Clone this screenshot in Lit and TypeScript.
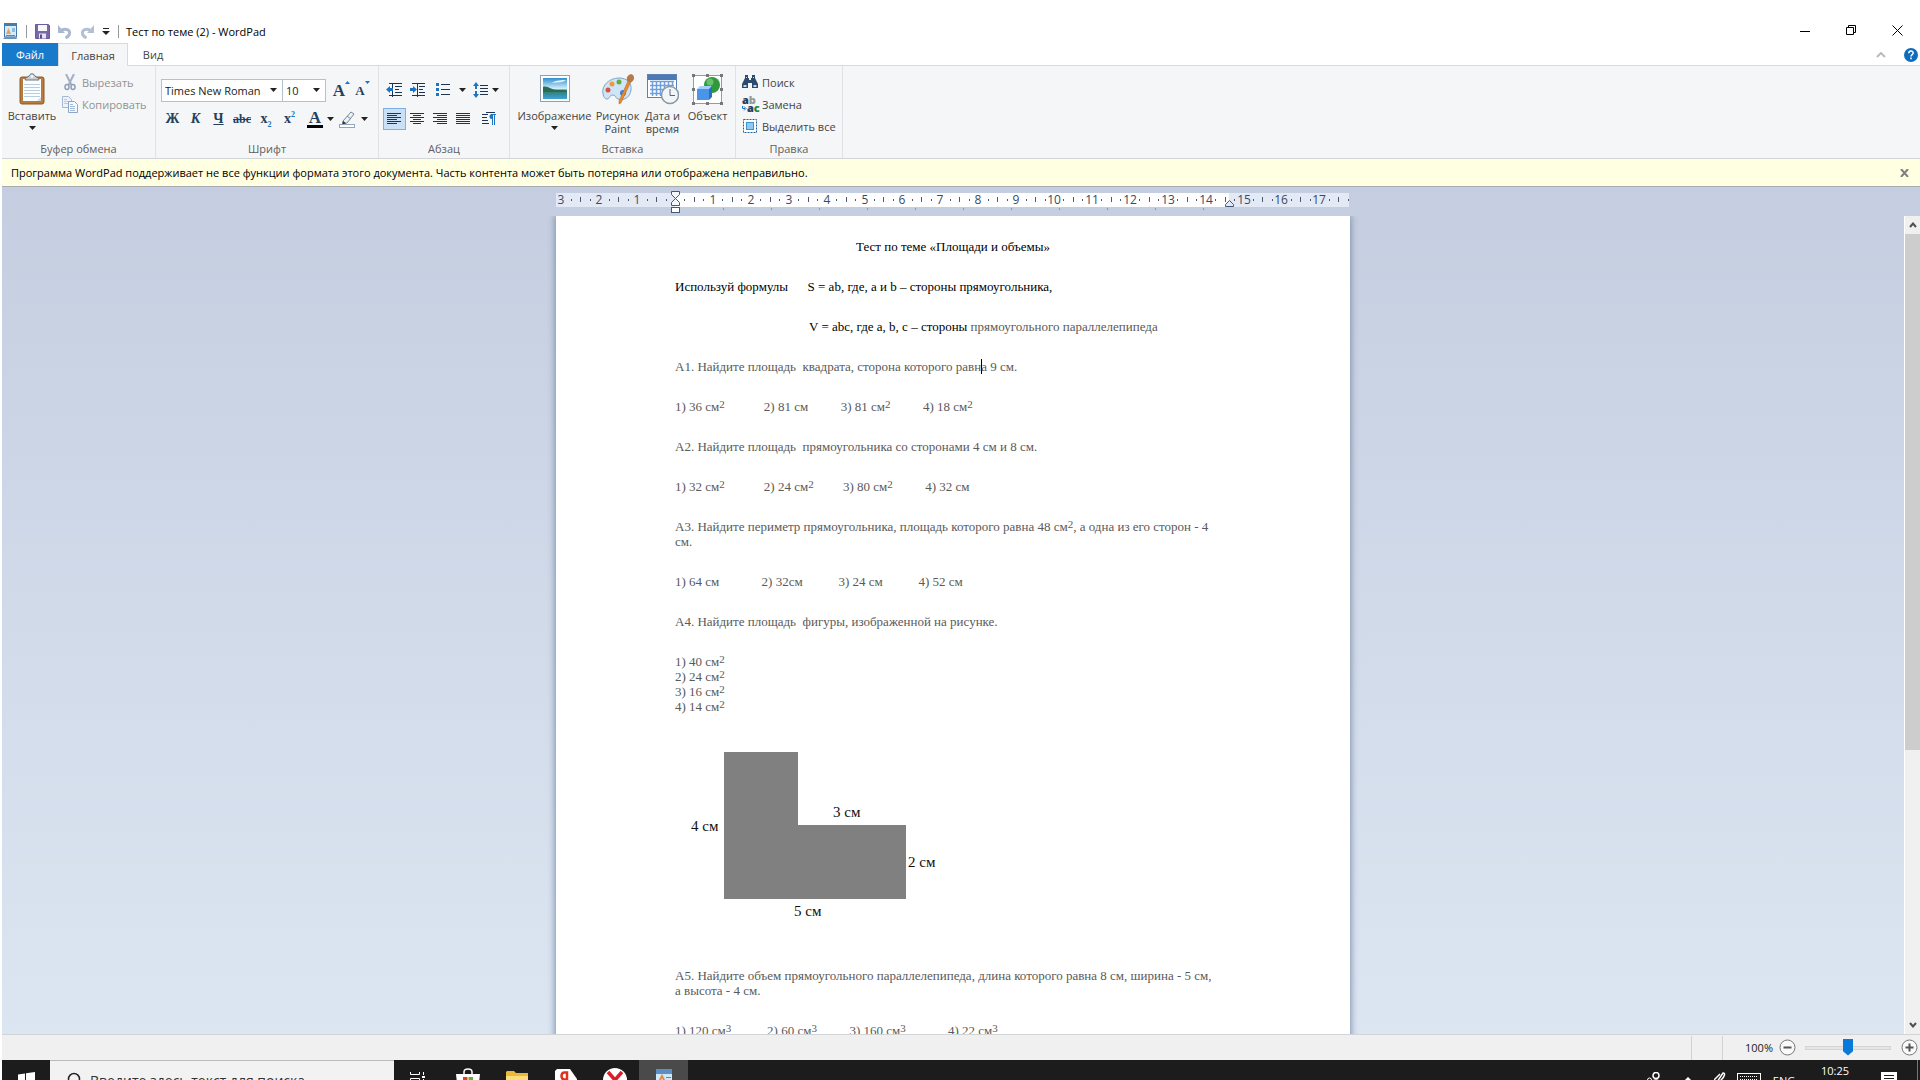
import { LitElement, html, svg, css, nothing, TemplateResult } from "lit";
import { customElement, property, state } from "lit/decorators.js";
import { classMap } from "lit/directives/class-map.js";

/* ---------- icons ---------- */

const icon = (w: number, h: number, body: TemplateResult) =>
  html`<svg width=${w} height=${h} viewBox="0 0 ${w} ${h}" aria-hidden="true">${body}</svg>`;

const arrowDown = icon(7, 4, svg`<path d="M0 0h7L3.5 4z" fill="#222"/>`);

const appIcon = icon(15, 17, svg`
  <rect x="1.5" y="1" width="12" height="13" fill="#d6ecfb" stroke="#3f78ad"/>
  <rect x="1" y="0" width="13" height="3" fill="#4a7ba8"/>
  <path d="M3 11l2.5-6L8 11z" fill="#e9a25c"/><path d="M9 6h3M9 8h3M3 12.500h9" stroke="#3f8fd0"/>
  <path d="M0 16l2-2h11l1 2z" fill="#6c93b8"/>`);
const saveIcon = icon(15, 15, svg`
  <path d="M.5.5h13l1 1v13H.5z" fill="#7a68a8" stroke="#6c5a9c"/>
  <rect x="3" y="1" width="9" height="6" fill="#f6f6fb"/><rect x="4" y="9.500" width="7" height="5" fill="#e7e4f2"/>
  <rect x="5" y="10.500" width="2" height="4" fill="#5b4a8a"/>`);
const undoIcon = icon(14, 14, svg`
  <path d="M3 5.500C8 3 12 4.500 11.500 8.500c-.3 2-2 3.500-4 4.500" fill="none" stroke="#a9b8cf" stroke-width="3"/>
  <path d="M0 0v8h7z" fill="#a9b8cf"/>`);
const redoIcon = icon(14, 14, svg`
  <path d="M11 5.500C6 3 2 4.500 2.500 8.500c.3 2 2 3.500 4 4.500" fill="none" stroke="#b3c0d3" stroke-width="3"/>
  <path d="M14 0v8H7z" fill="#b3c0d3"/>`);
const customizeIcon = icon(8, 8, svg`<path d="M1 .5h6" stroke="#222"/><path d="M0 3h8L4 7z" fill="#222"/>`);

const minimizeIcon = icon(11, 11, svg`<path d="M0 6.500h10" stroke="#000"/>`);
const restoreIcon = icon(11, 11, svg`<path d="M.5 2.500h7v7h-7zM2.500 2.500v-2h7v7h-2" fill="none" stroke="#000"/>`);
const closeIcon = icon(11, 11, svg`<path d="M.5.5l10 10M10.500.5l-10 10" stroke="#000"/>`);
const chevronUp = icon(10, 6, svg`<path d="M1 5l4-4 4 4" fill="none" stroke="#bbb" stroke-width="2"/>`);
const helpIcon = html`<svg width="14" height="14" viewBox="0 0 14 14" aria-hidden="true">
  <circle cx="7" cy="7" r="7" fill="#0f6cbd"/>
  <path d="M4.800 5.300c0-3 4.400-3 4.400-.3 0 1.600-2.200 1.600-2.200 3.400M7 9.600v1.600" fill="none" stroke="#fff" stroke-width="1.500"/></svg>`;

const pasteIcon = icon(26, 32, svg`
  <rect x="1" y="4" width="24" height="27" rx="2" fill="#b87a3d" stroke="#8c5a2a"/>
  <rect x="4" y="6" width="18" height="22" fill="#fbfdff"/>
  <path d="M5 11.500h16M5 14.500h16M5 17.500h16M5 20.500h16M5 23.500h16" stroke="#b9cde0"/>
  <path d="M6 7c0-3 3-2 4-4 1-3 5-3 6 0 1 2 4 1 4 4z" fill="#c9ced3" stroke="#6f777e"/>
  <circle cx="13" cy="3.500" r="1.200" fill="#fff"/><path d="M18 28l4-4v4z" fill="#cfd8e2"/>`);
const cutIcon = icon(12, 17, svg`
  <path d="M2 0l5.500 11M10 0L4.500 11" stroke="#a3b0c2" stroke-width="2" fill="none"/>
  <ellipse cx="3" cy="13" rx="2" ry="2.500" fill="none" stroke="#8fa0b8" stroke-width="1.500"/>
  <ellipse cx="9" cy="13" rx="2" ry="2.500" fill="none" stroke="#8fa0b8" stroke-width="1.500"/>`);
const copyIcon = icon(16, 17, svg`
  <path d="M.5.5h6l3 3v8h-9z" fill="#eef3fa" stroke="#a5b9d2"/><path d="M2 5.500h5M2 7.500h5M2 3.500h3" stroke="#b9c9de"/>
  <path d="M6.500 5.500h6l3 3v8h-9z" fill="#f4f8fd" stroke="#8ba6c6"/><path d="M8 10.500h5M8 12.500h5M8 14.500h5M8 8.500h3" stroke="#a5bcd8"/>`);

const brushIcon = icon(18, 17, svg`
  <path d="M5 10L13 1l3 2-7 9-4 1z" fill="#eef1f4" stroke="#7a8794"/><path d="M9 5l4 3" stroke="#7a8794"/>
  <path d="M5 10l3 2-4 2z" fill="#333"/><rect x="1.500" y="13.500" width="15" height="3" fill="#fff" stroke="#8fa6c0"/>`);
const outdentIcon = icon(17, 14, svg`
  <path d="M3 .5h13M9 3.500h7M9 6.500h4M9 9.500h7M3 12.500h13M6.500 0v14" stroke="#1e3450" stroke-dasharray="none"/>
  <path d="M0 6.500L4 3v2h3v3H4v2z" fill="#1c74c4"/>`);
const indentIcon = icon(17, 14, svg`
  <path d="M3 .5h13M10 3.500h6M10 6.500h4M10 9.500h6M3 12.500h13M8.500 0v14" stroke="#1e3450"/>
  <path d="M8 6.500L4 3v2H1v3h3v2z" fill="#1c74c4"/>`);
const bulletsIcon = icon(15, 14, svg`
  <path d="M0 0h3v3H0zM0 5h3v3H0zM0 10h3v3H0z" fill="#1c74c4"/><path d="M5 1.500h9M5 6.500h9M5 11.500h9" stroke="#1e3450"/>`);
const spacingIcon = icon(16, 16, svg`
  <path d="M0 4l3-4 3 4H4v3H2V4zM0 12l3 4 3-4H4V9H2v3z" fill="#1c74c4"/>
  <path d="M7 3.500h8M7 6.500h8M7 9.500h8M7 12.500h8" stroke="#1e3450"/>`);

const alignIcon = (rows: number[][]) => icon(15, 12, svg`${rows.map(
  ([x, w], i) => svg`<rect x=${x} y=${i * 2} width=${w} height="1" fill="#1e3450"/>`)}`);
const alignLeft = alignIcon([[0, 14], [0, 10], [0, 14], [0, 10], [0, 14], [0, 10]]);
const alignCenter = alignIcon([[0, 14], [3, 8], [0, 14], [3, 8], [0, 14], [3, 8]]);
const alignRight = alignIcon([[0, 14], [4, 10], [0, 14], [4, 10], [0, 14], [4, 10]]);
const alignJustify = alignIcon([[0, 14], [0, 14], [0, 14], [0, 14], [0, 14], [0, 14]]);
const paragraphIcon = icon(15, 14, svg`
  <path d="M0 2.500h6M0 5.500h5M0 8.500h6M0 11.500h7M4 .5h9" stroke="#1e3450"/>
  <path d="M10 2a2.500 2.500 0 000 5z" fill="#1c74c4"/><path d="M10.500 2v11M12.500 2v11M9 2.500h5" fill="none" stroke="#1c74c4"/>`);

const pictureIcon = icon(30, 28, svg`
  <defs><linearGradient id="sky" x2="0" y2="1"><stop offset="0" stop-color="#2f8fd0"/><stop offset=".5" stop-color="#cfeefa"/>
  <stop offset=".6" stop-color="#2f7a6a"/><stop offset="1" stop-color="#3fa3d8"/></linearGradient></defs>
  <rect x=".5" y=".5" width="29" height="26" fill="#fff" stroke="#8ea1b3"/>
  <rect x="3" y="3" width="24" height="21" fill="url(#sky)"/>
  <path d="M3 12c4-2 8 3 14 3s8 0 10 1v1H3z" fill="#2b6b52"/><path d="M12 8c4-3 9-3 14-3-3 3-8 2-14 3z" fill="#fff" opacity=".8"/>`);
const paintIcon = icon(34, 32, svg`
  <path d="M2 21C0 12 9 5 18 5c8 0 13 5 12 12-1 8-8 11-13 9-3-1-2-4-5-4-4 0-3 4-6 4-2 0-3.500-2-4-5z" fill="#cfe4f6" stroke="#7fa5c8"/>
  <circle cx="7" cy="17" r="2.500" fill="#d9503f"/><circle cx="11" cy="11" r="2.500" fill="#ef9a3a"/>
  <circle cx="18" cy="9" r="2.500" fill="#5fae3e"/><circle cx="22" cy="20" r="3" fill="#3c7fd0"/>
  <path d="M27 8l2.500 1.500L20 30l-2 1v-3z" fill="#e58a32" stroke="#b8621c" stroke-width=".5"/>
  <path d="M26 8c-1-4 1-6 4-7l2 1c2 3 1 6-3 8z" fill="#b67a4a"/>`);
const calendarIcon = icon(32, 32, svg`
  <rect x=".5" y="1.500" width="29" height="23" fill="#fff" stroke="#5b82b5"/><rect x="1" y="2" width="28" height="5" fill="#4d79b4"/>
  <path d="M3 8.500h24M3 12.500h24M3 16.500h24M3 20.500h20M5.500 8v15M9.500 8v15M13.500 8v15M17.500 8v8M21.500 8v6M25.500 8v5" stroke="#6fa0dc" stroke-width="1.500"/>
  <circle cx="23" cy="22" r="8.500" fill="#f3f6f9" stroke="#8c98a5" stroke-width="1.500"/><path d="M23 16v6.500h5" fill="none" stroke="#5a6672"/>`);
const objectIcon = icon(31, 31, svg`
  <rect x="1.500" y="1.500" width="28" height="28" fill="#fff" stroke="#9b9b9b"/>
  <path d="M0 0h3v3H0zM14 0h3v3h-3zM28 0h3v3h-3zM0 14h3v3H0zM28 14h3v3h-3zM0 28h3v3H0zM14 28h3v3h-3zM28 28h3v3h-3z" fill="#777"/>
  <circle cx="20" cy="11" r="8" fill="#2f9a3c"/><circle cx="18" cy="8" r="3.500" fill="#7fd07f" opacity=".7"/>
  <path d="M5 15l3-3h12l-2 3z" fill="#9fd0ff"/><path d="M5 15h12v11H5z" fill="#4a95ea"/><path d="M17 15l3-3v11l-3 3z" fill="#2a6fc4"/>`);

const findIcon = icon(16, 14, svg`
  <path d="M3 0h3v3h1v2h2V3h1V0h3v3l3 6v4h-6V8H6v5H0V9l3-6z" fill="#2c4a6c"/>
  <path d="M1.500 10h3v2h-3zM11.500 10h3v2h-3z" fill="#c8d8ea"/><path d="M4 2.500h1M11 2.500h1" stroke="#c8d8ea"/>`);
const replaceIcon = html`<span class="replace-glyph" aria-hidden="true"><b>a<i>b</i></b><b>${icon(5, 5, svg`
  <path d="M.5 0v2.500H3M2 .5l2 2-2 2" fill="none" stroke="#1c74c4"/>`)}a<u>c</u></b></span>`;
const selectAllIcon = icon(15, 15, svg`
  <rect x=".5" y=".5" width="13" height="13" fill="#fff" stroke="#1f5f9c" stroke-dasharray="2 1"/>
  <rect x="3.500" y="3.500" width="7" height="7" fill="#8ccbf2" stroke="#3f93d0"/>`);

const winIcon = icon(17, 17, svg`
  <path d="M0 2.500L7 1.500V8H0zM8 1.300L17 0v8H8zM0 9h7v6.500L0 14.500zM8 9h9v8l-9-1.300z" fill="#fff"/>`);
const searchIcon = icon(16, 18, svg`
  <circle cx="9" cy="7" r="5.500" fill="none" stroke="#222" stroke-width="1.500"/><path d="M5 11l-4 5" stroke="#222" stroke-width="1.500"/>`);
const taskViewIcon = icon(17, 16, svg`
  <path d="M.5 0v2.500h9V0M.5 6.500h9v5h-9zM.5 16v-2.500h9V16M13.500 0v3M13.500 7v9" fill="none" stroke="#fff"/>
  <rect x="12" y="4" width="3" height="2" fill="#fff"/>`);
const storeIcon = icon(24, 24, svg`
  <path d="M8 7V4c0-4 8-4 8 0v3" fill="none" stroke="#fff" stroke-width="1.500"/><path d="M0 6h24l-2 18H2z" fill="#fff"/>
  <path d="M7 9h4.500v4.500H7z" fill="#d6472b"/><path d="M12.500 9H17v4.500h-4.500z" fill="#6fae2c"/>
  <path d="M7 14.500h4.500V19H7z" fill="#2a8fd6"/><path d="M12.500 14.500H17V19h-4.500z" fill="#f2b01e"/>`);
const folderIcon = icon(22, 18, svg`
  <path d="M0 1l1-1h7l2 2h12v16H0z" fill="#e9b93c"/><path d="M0 5h22v13H0z" fill="#ffdc7a"/>`);
const yandexIcon = icon(22, 22, svg`
  <path d="M2 0h13l7 10v10l-2 2H2l-2-2V2z" fill="#fff"/>
  <path d="M12 19V3.500H9.500c-4 0-4 7 0 7H12M8.500 11L6 19" fill="none" stroke="#e0301e" stroke-width="2.500"/>`);
const browserIcon = icon(24, 24, svg`
  <circle cx="12" cy="12" r="12" fill="#fff"/><path d="M5 4l7 8 7-8M12 12v12" fill="none" stroke="#d81e2c" stroke-width="3.500"/>`);
const wordpadTask = icon(16, 22, svg`
  <rect width="16" height="22" fill="#cfe8fa"/><rect width="16" height="5" fill="#5b8fc2"/>
  <path d="M2 15L6 7l4 8" fill="none" stroke="#e58a4a" stroke-width="2"/><path d="M10 8.500h5M11 11.500h4M2 18.500h12" stroke="#3a8fd8"/>`);

const peopleIcon = icon(16, 16, svg`
  <circle cx="10" cy="3.500" r="3" fill="none" stroke="#fff" stroke-width="1.500"/><circle cx="3.500" cy="8" r="2" fill="none" stroke="#fff"/>
  <path d="M5 14c0-8 10-8 10 0" fill="none" stroke="#fff" stroke-width="1.500"/>`);
const trayChevron = icon(10, 6, svg`<path d="M1 5l4-4 4 4" fill="none" stroke="#fff" stroke-width="1.500"/>`);
const penTray = icon(12, 16, svg`
  <path d="M1 13L9 1c3 0 1 4-1 6s-3 3-3 6M0 8L6 2" fill="none" stroke="#fff" stroke-width="1.500"/>`);
const keyboardIcon = icon(24, 14, svg`
  <rect x=".5" y=".5" width="23" height="13" fill="none" stroke="#fff"/>
  <path d="M3 3.500h18M3 6.500h18" stroke="#fff" stroke-dasharray="1 1"/><path d="M6 10.500h12" stroke="#fff"/>`);
const noticeIcon = icon(17, 17, svg`
  <path d="M0 0h16v13H8l-4 4v-4H0z" fill="#fff"/><path d="M3 3.500h10M3 6.500h10M3 9.500h7" stroke="#1c1c1c"/>`);

/* ---------- ruler ---------- */

@customElement("doc-ruler")
export class DocRuler extends LitElement {
  @property({ type: Number }) origin = 119;

  static styles = css`
    :host { display: block; flex: none; width: 794px; height: 29px; }
    svg { display: block; }
    text { font: 12px "Open Sans", "Noto Sans", sans-serif; fill: #3a4a63; text-anchor: middle; }
  `;

  render() {
    const cm = 37.9;
    const marks: TemplateResult[] = [];
    for (let q = -12; q < 72; q++) {
      const x = this.origin + (q * cm) / 4;
      if (x > 792 || q === 0) continue;
      const px = Math.round(x);
      if (q % 4 === 0) marks.push(svg`<text x=${Math.max(px, 5)} y="17">${Math.abs(q / 4)}</text>`);
      else if (q % 2 === 0) marks.push(svg`<rect x=${px} y="10" width="1" height="5" fill="#4a5a74"/>`);
      else marks.push(svg`<rect x=${px} y="12" width="1" height="2" fill="#4a5a74"/>`);
    }
    const stops = Array.from({ length: 11 }, (_, i) => this.origin + 48 * (i + 1));
    return html`<svg width="794" height="29" viewBox="0 0 794 29" role="img" aria-label="Линейка">
      <rect y="6" width="793" height="14" fill="#e4eaf5"/>
      <rect x=${this.origin} y="6" width="554" height="14" fill="#fff"/>
      ${stops.map(x => svg`<rect x=${x} y="21" width="1" height="2" fill="#8a97ab"/>`)}
      ${marks}
      <path d="M115.500 4.500h8v3l-4 4 4 4v3h-8v-3l4-4-4-4z" fill="#f4f7fb" stroke="#44597a"/>
      <rect x="115.500" y="20.500" width="8" height="5" fill="#fff" stroke="#44597a"/>
      <path d="M669.500 19.500v-2l4-4 4 4v2z" fill="#e4eaf5" stroke="#44597a"/>
    </svg>`;
  }
}

/* ---------- document ---------- */

const sq = html`<sup>2</sup>`;
const cb = html`<sup>3</sup>`;
const sp = (n: number) => "\u00a0".repeat(n);

@customElement("doc-page")
export class DocPage extends LitElement {
  static styles = css`
    :host {
      display: block; flex: none; box-sizing: border-box; width: 794px;
      padding: 23px 119px 60px; background: #fff;
      box-shadow: 0 0 7px 1px #7d8eaa;
      font: 13px/15px "Liberation Serif", "Times New Roman", serif; color: #5a5a5a;
    }
    .body { display: flex; flex-direction: column; gap: 25px; }
    p { margin: 0; white-space: nowrap; }
    .ink { color: #000; }
    .title { text-align: center; }
    .formula { padding-left: 134px; }
    sup { font-size: 11px; line-height: 0; vertical-align: 3px; }
    .caret { display: inline-block; width: 1px; height: 15px; margin-right: -1px; background: #000; vertical-align: text-bottom; }
    svg { display: block; }
    svg text { font-size: 15px; fill: #111; }
  `;

  render() {
    return html`<article class="body">
      <p class="title ink">Тест по теме «Площади и объемы»</p>
      <p class="ink">Используй формулы${sp(6)}S = ab, где, a и b – стороны прямоугольника,</p>
      <p class="formula"><span class="ink">V = abc, где a, b, c – стороны</span> прямоугольного параллелепипеда</p>
      <p>А1. Найдите площадь${sp(2)}квадрата, сторона которого равн<span class="caret"></span>а 9 см.</p>
      <p>1) 36 см${sq}${sp(11)} 2) 81 см${sp(10)}3) 81 см${sq}${sp(9)} 4) 18 см${sq}</p>
      <p>А2. Найдите площадь${sp(2)}прямоугольника со сторонами 4 см и 8 см.</p>
      <p>1) 32 см${sq}${sp(11)} 2) 24 см${sq}${sp(9)}3) 80 см${sq}${sp(9)} 4) 32 см</p>
      <p>А3. Найдите периметр прямоугольника, площадь которого равна 48 см${sq}, а одна из его сторон - 4<br>см.</p>
      <p>1) 64 см${sp(12)} 2) 32см${sp(11)}3) 24 см${sp(10)} 4) 52 см</p>
      <p>А4. Найдите площадь${sp(2)}фигуры, изображенной на рисунке.</p>
      <p>1) 40 см${sq}<br>2) 24 см${sq}<br>3) 16 см${sq}<br>4) 14 см${sq}</p>
      <svg width="300" height="204" viewBox="0 0 300 204" role="img" aria-label="Фигура">
        <path d="M49 13h74v73h108v74H49z" fill="#808080"/>
        <text x="16" y="92">4 см</text><text x="158" y="78">3 см</text>
        <text x="233" y="128">2 см</text><text x="119" y="177">5 см</text>
      </svg>
      <p>А5. Найдите объем прямоугольного параллелепипеда, длина которого равна 8 см, ширина - 5 см,<br>а высота - 4 см.</p>
      <p>1) 120 см${cb}${sp(10)} 2) 60 см${cb}${sp(10)}3) 160 см${cb}${sp(12)} 4) 22 см${cb}</p>
    </article>`;
  }
}

/* ---------- application ---------- */

@customElement("app-root")
export class AppRoot extends LitElement {
  @state() private align = "left";
  @state() private zoom = 50;
  @state() private notice = true;

  static styles = css`
    :host {
      display: flex; flex-direction: column; box-sizing: border-box; height: 100vh;
      padding: 16px 0 0 2px; overflow: hidden; background: #fff; color: #444;
      font: 11px/13px "Open Sans", "Noto Sans", sans-serif;
    }
    svg { display: block; flex: none; }
    button, select, input { font: inherit; color: inherit; }
    button { display: flex; align-items: center; justify-content: center; margin: 0; padding: 0; border: 0; background: none; white-space: nowrap; }
    a { color: inherit; text-decoration: none; }
    .row { display: flex; align-items: center; }

    .titlebar { display: flex; align-items: center; height: 27px; flex: none; color: #000; }
    .quick { display: flex; align-items: center; gap: 8px; padding: 4px 0 0 1px; }
    .bar { width: 1px; height: 13px; background: #999; }
    h1 { margin: 0 auto 0 7px; padding-top: 4px; font: inherit; line-height: 16px; }
    .window { display: flex; align-self: flex-start; }
    .window button { width: 46px; height: 28px; }

    .tabs { display: flex; align-items: stretch; height: 23px; flex: none; box-shadow: inset 0 -1px #d9dadb; }
    .tabs a { display: flex; align-items: center; justify-content: center; box-sizing: border-box; }
    .tab-file { width: 56px; background: #1979ca; color: #fff; }
    .tab-home { width: 70px; background: #f5f6f7; border: 1px solid #d9dadb; border-bottom: 0; }
    .tab-view { width: 50px; }
    .tab-tools { display: flex; align-items: center; gap: 18px; margin-left: auto; padding-right: 2px; }
    .tab-tools button { flex: none; }

    .ribbon { display: flex; height: 92px; flex: none; background: #f5f6f7; border-bottom: 1px solid #d3d4d5; }
    .group { display: flex; flex-direction: column; box-sizing: border-box; border-right: 1px solid #e1e2e3; padding-bottom: 2px; }
    .group h2 { margin: 0; font: inherit; line-height: 14px; text-align: center; color: #5e5e5e; }
    .content { flex: 1; display: flex; }
    .clipboard { width: 154px; } .font { width: 223px; } .paragraph { width: 131px; } .insert { width: 226px; } .editing { width: 107px; }

    .big { flex-direction: column; justify-content: flex-start; gap: 4px; padding-top: 7px; text-align: center; }
    .big .pic { display: flex; align-items: center; justify-content: center; height: 32px; }
    .big .name { line-height: 13px; }
    .paste { width: 60px; }
    .w76 { width: 80px; } .w50 { width: 46px; } .w44 { width: 44px; } .w48 { width: 46px; }
    .insert .content { justify-content: center; }
    .stack { display: flex; flex-direction: column; padding-top: 5px; }
    .stack button { height: 22px; gap: 4px; justify-content: flex-start; }
    .stack .ico { display: flex; justify-content: center; width: 16px; }
    .off { color: #929292; }
    .editing .stack { padding-left: 6px; }

    .tools { display: flex; flex-direction: column; gap: 7px; padding: 13px 5px 0; }
    .tools .row { height: 22px; }
    .combo { display: grid; box-sizing: border-box; height: 23px; border: 1px solid #b6bfd0; background: #fff; align-items: center; }
    .combo + .combo { margin-left: -1px; }
    .combo > * { grid-area: 1 / 1; }
    .combo svg { justify-self: end; margin-right: 5px; pointer-events: none; }
    .combo select { appearance: none; box-sizing: border-box; width: 100%; height: 21px; padding: 0 12px 0 3px; border: 0; background: none; color: #222; outline: 0; }
    .family { width: 122px; } .size { width: 44px; }
    .glyph { width: 23px; height: 22px; font: bold 14px/20px "Liberation Serif", serif; color: #24405f; }
    .glyph.wide { width: 24px; }
    .glyph sup, .glyph sub { font-size: 8px; line-height: 0; color: #1c74c4; }
    .glyph i { font-weight: bold; }
    .glyph s { font-size: 12px; }
    .grow, .shrink { width: 21px; height: 22px; align-items: flex-end; font: bold 17px/20px "Liberation Serif", serif; color: #24405f; }
    .grow { margin-left: 5px; }
    .shrink { font-size: 13px; }
    .grow svg, .shrink svg { align-self: flex-start; margin-top: 2px; }
    .color { flex-direction: column; width: 16px; height: 18px; margin-left: 6px; font: bold 17px/13px "Liberation Serif", serif; color: #24405f; border-bottom: 3px solid #000; box-sizing: border-box; }
    .drop { width: 14px; height: 20px; }
    .pen { width: 20px; height: 20px; }

    .paragraph .tools { padding: 13px 4px 0; }
    .para { box-sizing: border-box; width: 23px; height: 22px; }
    .para.on { background: #c9e0f7; border: 1px solid #7db0e6; }
    .ml { margin-left: 3px; }

    .replace-glyph { display: block; width: 16px; font: bold 11px/8px "Open Sans", sans-serif; color: #24405f; }
    .replace-glyph b { display: flex; align-items: center; }
    .replace-glyph i { font-style: normal; color: #999; }
    .replace-glyph u { text-decoration: none; color: #1c8a3c; }

    .notice { display: flex; align-items: center; justify-content: space-between; height: 27px; flex: none; padding: 0 11px 0 9px; background: #ffffe1; border-bottom: 1px solid #a9adb3; color: #000; }

    .workspace { flex: 1; min-height: 0; display: flex; flex-direction: column; background: linear-gradient(#c5cee0, #dce6f2); }
    .ruler-row { display: flex; justify-content: center; padding-right: 16px; height: 29px; flex: none; }
    .view { flex: 1; min-height: 0; display: flex; }
    .canvas { flex: 1; display: flex; justify-content: center; overflow: hidden; align-items: flex-start; }
    .scroll { box-sizing: border-box; width: 16px; display: flex; flex-direction: column; background: #f0f0f0; border-left: 1px solid #fff; }
    .scroll button { height: 18px; flex: none; }
    .track { flex: 1; }
    .thumb { height: 66%; background: #cdcdcd; }

    .status { display: flex; align-items: center; justify-content: flex-end; box-sizing: border-box; height: 26px; flex: none; background: #f0f0f0; border-top: 1px solid #d2d5d8; color: #222; padding-right: 2px; }
    .cell { width: 30px; height: 24px; border-left: 1px solid #d2d2d2; }
    .percent { width: 50px; line-height: 24px; border-left: 1px solid #d2d2d2; text-align: right; margin-right: 6px; }
    .round { flex: none; }
    input[type="range"] { appearance: none; width: 86px; height: 18px; margin: 0 10px 0 9px; background: none; }
    input[type="range"]::-webkit-slider-runnable-track { height: 4px; background: #e6e6e6; border: 1px solid #d4d4d4; box-sizing: border-box; }
    input[type="range"]::-webkit-slider-thumb { appearance: none; width: 10px; height: 17px; margin-top: -8px; background: #0b79d8; clip-path: polygon(0 0, 100% 0, 100% 75%, 50% 100%, 0 75%); }

    .taskbar { height: 20px; flex: none; overflow: hidden; background: #1c1c1c; color: #fff; }
    .taskinner { display: flex; align-items: center; height: 40px; }
    .taskinner button { width: 49px; height: 40px; flex: none; }
    .taskinner .start { width: 48px; }
    .search { display: flex; align-items: center; gap: 9px; box-sizing: border-box; width: 344px; height: 40px; padding-left: 15px; background: #f2f2f2; border-top: 1px solid #bbb; }
    .search input { flex: 1; min-width: 0; border: 0; padding: 0; background: none; font-size: 14px; outline: 0; }
    .search input::placeholder { color: #333; opacity: 1; }
    .taskinner .running { background: #4a4a4a; }
    .tray { display: flex; align-items: center; height: 40px; margin-left: auto; }
    .taskinner .tray button { width: 34px; }
    .taskinner .tray .mid { width: 29px; }
    .lang { width: 42px; text-align: center; }
    .clock { width: 60px; align-self: flex-start; padding-top: 4px; line-height: 14px; text-align: center; }
    .taskinner .tray .bell { width: 48px; }
    .desk { width: 4px; height: 40px; border-right: 1px solid #777; margin-right: 2px; }
  `;

  private alignButton(id: string, label: string, glyph: TemplateResult) {
    return html`<button class=${classMap({ para: true, on: this.align === id })} aria-label=${label}
      aria-pressed=${this.align === id} @click=${() => (this.align = id)}>${glyph}</button>`;
  }

  private big(cls: string, pic: TemplateResult, name: TemplateResult, arrow = false) {
    return html`<button class="big ${cls}"><span class="pic">${pic}</span><span class="name">${name}</span>${arrow ? arrowDown : nothing}</button>`;
  }

  private small(pic: TemplateResult, name: string, off = false) {
    return html`<button class=${classMap({ off })} ?disabled=${off}><span class="ico">${pic}</span>${name}</button>`;
  }

  private ribbon() {
    return html`<section class="ribbon">
      <div class="group clipboard">
        <div class="content">
          ${this.big("paste", pasteIcon, html`Вставить`, true)}
          <div class="stack">${this.small(cutIcon, "Вырезать", true)}${this.small(copyIcon, "Копировать", true)}</div>
        </div>
        <h2>Буфер обмена</h2>
      </div>
      <div class="group font">
        <div class="content"><div class="tools">
          <div class="row">
            <label class="combo family"><select aria-label="Шрифт"><option>Times New Roman</option></select>${arrowDown}</label>
            <label class="combo size"><select aria-label="Размер"><option>10</option></select>${arrowDown}</label>
            <button class="grow" aria-label="Увеличить шрифт">A${icon(5, 3, svg`<path d="M0 3h5L2.500 0z" fill="#1c74c4"/>`)}</button>
            <button class="shrink" aria-label="Уменьшить шрифт">A${icon(5, 3, svg`<path d="M0 0h5L2.500 3z" fill="#1c74c4"/>`)}</button>
          </div>
          <div class="row">
            <button class="glyph">Ж</button><button class="glyph"><i>К</i></button><button class="glyph"><u>Ч</u></button>
            <button class="glyph wide"><s>abc</s></button>
            <button class="glyph wide"><span>x<sub>2</sub></span></button><button class="glyph"><span>x<sup>2</sup></span></button>
            <button class="color">A</button><button class="drop" aria-label="Цвет текста">${arrowDown}</button>
            <button class="pen" aria-label="Выделение">${brushIcon}</button><button class="drop" aria-label="Цвет выделения">${arrowDown}</button>
          </div>
        </div></div>
        <h2>Шрифт</h2>
      </div>
      <div class="group paragraph">
        <div class="content"><div class="tools">
          <div class="row">
            <button class="para" aria-label="Уменьшить отступ">${outdentIcon}</button>
            <button class="para" aria-label="Увеличить отступ">${indentIcon}</button>
            <button class="para ml" aria-label="Список">${bulletsIcon}</button><button class="drop" aria-label="Вид списка">${arrowDown}</button>
            <button class="para" aria-label="Интервал">${spacingIcon}</button>${arrowDown}
          </div>
          <div class="row">
            ${this.alignButton("left", "По левому краю", alignLeft)}
            ${this.alignButton("center", "По центру", alignCenter)}
            ${this.alignButton("right", "По правому краю", alignRight)}
            ${this.alignButton("justify", "По ширине", alignJustify)}
            <button class="para ml" aria-label="Абзац">${paragraphIcon}</button>
          </div>
        </div></div>
        <h2>Абзац</h2>
      </div>
      <div class="group insert">
        <div class="content">
          ${this.big("w76", pictureIcon, html`Изображение`, true)}
          ${this.big("w50", paintIcon, html`Рисунок<br>Paint`)}
          ${this.big("w44", calendarIcon, html`Дата и<br>время`)}
          ${this.big("w48", objectIcon, html`Объект`)}
        </div>
        <h2>Вставка</h2>
      </div>
      <div class="group editing">
        <div class="content"><div class="stack">
          ${this.small(findIcon, "Поиск")}${this.small(replaceIcon, "Замена")}${this.small(selectAllIcon, "Выделить все")}
        </div></div>
        <h2>Правка</h2>
      </div>
    </section>`;
  }

  render() {
    return html`
      <header class="titlebar">
        <div class="quick">
          ${appIcon}<span class="bar"></span>
          <button aria-label="Сохранить">${saveIcon}</button>
          <button aria-label="Отменить">${undoIcon}</button>
          <button aria-label="Вернуть">${redoIcon}</button>
          <button aria-label="Настройка панели">${customizeIcon}</button>
          <span class="bar"></span>
        </div>
        <h1>Тест по теме (2) - WordPad</h1>
        <div class="window">
          <button aria-label="Свернуть">${minimizeIcon}</button>
          <button aria-label="Восстановить">${restoreIcon}</button>
          <button aria-label="Закрыть">${closeIcon}</button>
        </div>
      </header>
      <nav class="tabs">
        <a class="tab-file" href="#file">Файл</a><a class="tab-home" href="#home">Главная</a><a class="tab-view" href="#view">Вид</a>
        <div class="tab-tools">
          <button aria-label="Свернуть ленту">${chevronUp}</button><button aria-label="Справка">${helpIcon}</button>
        </div>
      </nav>
      ${this.ribbon()}
      ${this.notice ? html`<div class="notice">
        <span>Программа WordPad поддерживает не все функции формата этого документа. Часть контента может быть потеряна или отображена неправильно.</span>
        <button aria-label="Закрыть сообщение" @click=${() => (this.notice = false)}>
          ${icon(9, 8, svg`<path d="M1 0l7 8M8 0L1 8" stroke="#808080" stroke-width="2"/>`)}</button>
      </div>` : nothing}
      <main class="workspace">
        <div class="ruler-row"><doc-ruler></doc-ruler></div>
        <div class="view">
          <div class="canvas"><doc-page></doc-page></div>
          <div class="scroll">
            <button aria-label="Вверх">${icon(8, 6, svg`<path d="M1 5l3-3.500L7 5" fill="none" stroke="#505050" stroke-width="2"/>`)}</button>
            <div class="track"><div class="thumb"></div></div>
            <button aria-label="Вниз">${icon(8, 6, svg`<path d="M1 1l3 3.500L7 1" fill="none" stroke="#505050" stroke-width="2"/>`)}</button>
          </div>
        </div>
      </main>
      <footer class="status">
        <span class="cell"></span>
        <label class="percent" for="zoom">100%</label>
        <button class="round" aria-label="Уменьшить" @click=${() => (this.zoom -= 10)}>${icon(17, 17, svg`
          <circle cx="8.500" cy="8.500" r="7.500" fill="#fafafa" stroke="#777"/><path d="M4.500 8.500h8" stroke="#555" stroke-width="2"/>`)}</button>
        <input id="zoom" type="range" min="0" max="100" .value=${String(this.zoom)}>
        <button class="round" aria-label="Увеличить" @click=${() => (this.zoom += 10)}>${icon(17, 17, svg`
          <circle cx="8.500" cy="8.500" r="7.500" fill="#fafafa" stroke="#777"/><path d="M4.500 8.500h8M8.500 4.500v8" stroke="#555" stroke-width="2"/>`)}</button>
      </footer>
      <div class="taskbar"><div class="taskinner">
        <button class="start" aria-label="Пуск">${winIcon}</button>
        <label class="search">${searchIcon}<input type="text" aria-label="Поиск" placeholder="Введите здесь текст для поиска"></label>
        <button aria-label="Представление задач">${taskViewIcon}</button>
        <button aria-label="Магазин">${storeIcon}</button>
        <button aria-label="Проводник">${folderIcon}</button>
        <button aria-label="Яндекс">${yandexIcon}</button>
        <button aria-label="Браузер">${browserIcon}</button>
        <button class="running" aria-label="WordPad">${wordpadTask}</button>
        <div class="tray">
          <button aria-label="Люди">${peopleIcon}</button>
          <button aria-label="Скрытые значки">${trayChevron}</button>
          <button class="mid" aria-label="Перо">${penTray}</button>
          <button class="mid" aria-label="Клавиатура">${keyboardIcon}</button>
          <span class="lang">ENG</span><span class="clock">10:25</span>
          <button class="bell" aria-label="Уведомления">${noticeIcon}</button>
          <span class="desk"></span>
        </div>
      </div></div>`;
  }
}
